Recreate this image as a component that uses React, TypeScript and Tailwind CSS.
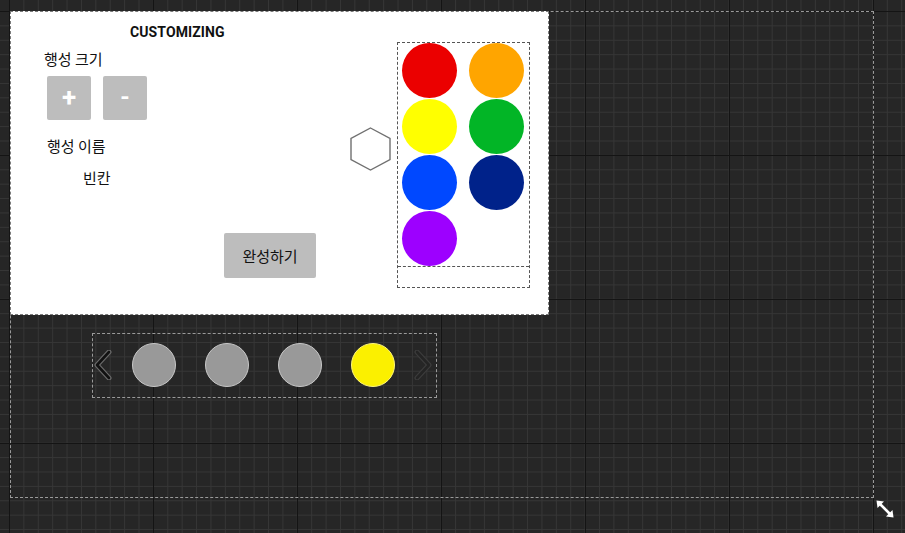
import React from "react";

const palette = ["#eb0000", "#ffa500", "#ffff00", "#02b526", "#0048ff", "#00228a", "#9d00ff"];

function Chevron({ dir, dim }: { dir: "left" | "right"; dim?: boolean }) {
  const pts = dir === "left" ? "15,2 3,15 15,28" : "3,2 15,15 3,28";
  return (
    <svg width="18" height="30" viewBox="0 0 18 30" className="shrink-0">
      <polyline points={pts} fill="none" stroke={dim ? "#3c3c3c" : "#6a6a6a"} strokeWidth="5" strokeLinecap="round" strokeLinejoin="round" />
      <polyline points={pts} fill="none" stroke={dim ? "#242424" : "#111111"} strokeWidth="2.6" strokeLinecap="round" strokeLinejoin="round" />
    </svg>
  );
}

export default function App() {
  return (
    <div className="relative w-[905px] h-[533px] overflow-hidden bg-[#262626] bg-[image:linear-gradient(to_right,#141414_1px,transparent_1px),linear-gradient(to_bottom,#141414_1px,transparent_1px),linear-gradient(to_right,#363636_1px,transparent_1px),linear-gradient(to_bottom,#363636_1px,transparent_1px)] bg-[length:144px_144px,144px_144px,14.4px_14.4px,14.4px_14.4px] bg-[position:9px_11px] pt-[11px] pl-[10px] font-['Noto_Sans_CJK_KR',sans-serif] text-[#111]">
      <div className="w-[864px] h-[487px] border border-dashed border-[#9a9a9a]">
        <div className="-mt-px -ml-px w-[539px] h-[304px] bg-white border border-dashed border-[#7a7a7a] flex">
          <div className="w-[330px] flex flex-col items-start">
            <div className="mt-[10px] ml-[119px] font-['Roboto',sans-serif] font-bold text-[14px] leading-[20px] tracking-[0.1px]">CUSTOMIZING</div>
            <div className="mt-[7px] ml-[33px] text-[15px] leading-[20px]">행성 크기</div>
            <div className="mt-[7px] ml-[36px] flex gap-[12px]">
              <div className="w-[44px] h-[44px] rounded-[2px] bg-[#bdbdbd] flex items-center justify-center text-white font-['Roboto',sans-serif] font-bold text-[26px] leading-none pb-[2px]">+</div>
              <div className="w-[44px] h-[44px] rounded-[2px] bg-[#bdbdbd] flex items-center justify-center text-white font-['Roboto',sans-serif] font-bold text-[24px] leading-none pb-[3px]">-</div>
            </div>
            <div className="mt-[16px] ml-[36px] text-[15px] leading-[20px]">행성 이름</div>
            <div className="mt-[12px] ml-[72px] text-[15px] leading-[20px]">빈칸</div>
            <div className="mt-[45px] ml-[213px] w-[92px] h-[45px] rounded-[2px] bg-[#bdbdbd] flex items-center justify-center text-[15px] leading-[20px]">완성하기</div>
          </div>
          <svg width="42" height="44" viewBox="0 0 42 44" className="mt-[115px] ml-[9px] shrink-0">
            <polygon points="20.5,1 40,11.5 40,32.5 20.5,43 1,32.5 1,11.5" fill="none" stroke="#707070" strokeWidth="1.4" />
          </svg>
          <div className="mt-[30px] ml-[5px] w-[133px] h-[246px] border border-dashed border-[#555] flex flex-col">
            <div className="grid grid-cols-[55px_55px] gap-x-[12px] gap-y-[1px] pl-[4px]">
              {palette.map((c) => (
                <div key={c} className="w-[55px] h-[55px] rounded-full" style={{ backgroundColor: c }} />
              ))}
            </div>
            <div className="flex-1 border-t border-dashed border-[#555]" />
          </div>
        </div>
        <div className="mt-[18px] ml-[81px] w-[345px] h-[65px] border border-dashed border-[#9a9a9a] flex items-center pb-[2px]">
          <div className="ml-[1px]">
            <Chevron dir="left" />
          </div>
          <div className="ml-[20px] flex gap-[29px]">
            <div className="w-[44px] h-[44px] rounded-full bg-[#999999] border border-[#c8c8c8]" />
            <div className="w-[44px] h-[44px] rounded-full bg-[#999999] border border-[#c8c8c8]" />
            <div className="w-[44px] h-[44px] rounded-full bg-[#999999] border border-[#c8c8c8]" />
            <div className="w-[44px] h-[44px] rounded-full bg-[#fbf000] border border-[#fff67a]" />
          </div>
          <div className="ml-[19px]">
            <Chevron dir="right" dim />
          </div>
        </div>
      </div>
      <svg width="20" height="20" viewBox="0 0 20 20" className="absolute left-[875px] top-[499px]">
        <line x1="5" y1="5" x2="15" y2="15" stroke="#fff" strokeWidth="2.6" />
        <polygon points="1.5,1.5 9,2.5 2.5,9" fill="#fff" />
        <polygon points="18.5,18.5 11,17.5 17.5,11" fill="#fff" />
      </svg>
    </div>
  );
}
